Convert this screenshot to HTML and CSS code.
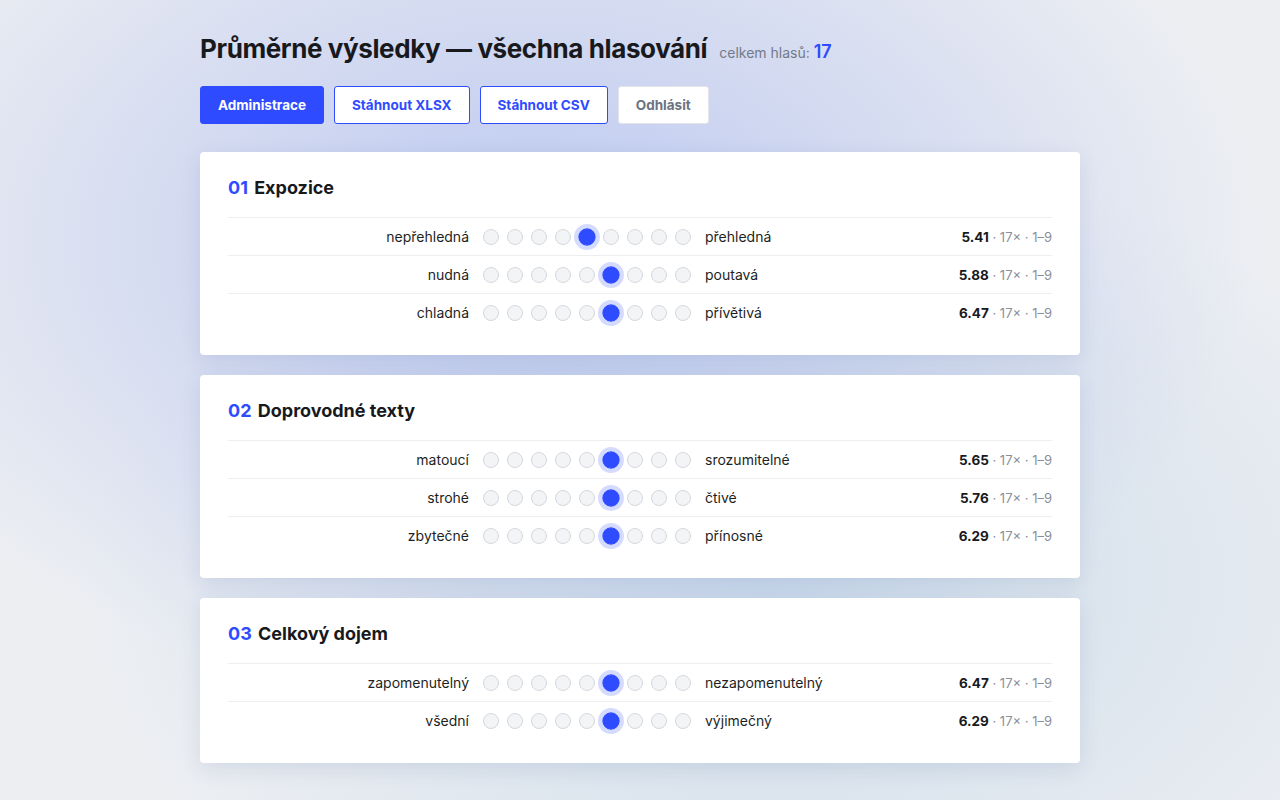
FILE: index.html
```html
<!DOCTYPE html>
<html lang="cs">
  <head>
    <meta charset="UTF-8" />
    <meta name="viewport" content="width=device-width, initial-scale=1.0" />
    <title>Průměrné výsledky</title>
    <link rel="stylesheet" href="styles.css">
  </head>
  <body>
    <div class="page">
      <header class="head">
        <h1>Průměrné výsledky — všechna hlasování</h1>
        <span class="total">celkem hlasů: <b>17</b></span>
      </header>
      <nav class="actions">
        <button class="btn primary">Administrace</button>
        <button class="btn outline">Stáhnout XLSX</button>
        <button class="btn outline">Stáhnout CSV</button>
        <button class="btn plain">Odhlásit</button>
      </nav>

      <section class="card">
        <h2><span class="num">01</span> Expozice</h2>
        <div class="row">
          <span class="lbl-left">nepřehledná</span>
          <span class="dots"><i></i><i></i><i></i><i></i><i class="on"></i><i></i><i></i><i></i><i></i></span>
          <span class="lbl-right">přehledná</span>
          <span class="stat"><b>5.41</b> · 17× · 1–9</span>
        </div>
        <div class="row">
          <span class="lbl-left">nudná</span>
          <span class="dots"><i></i><i></i><i></i><i></i><i></i><i class="on"></i><i></i><i></i><i></i></span>
          <span class="lbl-right">poutavá</span>
          <span class="stat"><b>5.88</b> · 17× · 1–9</span>
        </div>
        <div class="row">
          <span class="lbl-left">chladná</span>
          <span class="dots"><i></i><i></i><i></i><i></i><i></i><i class="on"></i><i></i><i></i><i></i></span>
          <span class="lbl-right">přívětivá</span>
          <span class="stat"><b>6.47</b> · 17× · 1–9</span>
        </div>
      </section>

      <section class="card">
        <h2><span class="num">02</span> Doprovodné texty</h2>
        <div class="row">
          <span class="lbl-left">matoucí</span>
          <span class="dots"><i></i><i></i><i></i><i></i><i></i><i class="on"></i><i></i><i></i><i></i></span>
          <span class="lbl-right">srozumitelné</span>
          <span class="stat"><b>5.65</b> · 17× · 1–9</span>
        </div>
        <div class="row">
          <span class="lbl-left">strohé</span>
          <span class="dots"><i></i><i></i><i></i><i></i><i></i><i class="on"></i><i></i><i></i><i></i></span>
          <span class="lbl-right">čtivé</span>
          <span class="stat"><b>5.76</b> · 17× · 1–9</span>
        </div>
        <div class="row">
          <span class="lbl-left">zbytečné</span>
          <span class="dots"><i></i><i></i><i></i><i></i><i></i><i class="on"></i><i></i><i></i><i></i></span>
          <span class="lbl-right">přínosné</span>
          <span class="stat"><b>6.29</b> · 17× · 1–9</span>
        </div>
      </section>

      <section class="card">
        <h2><span class="num">03</span> Celkový dojem</h2>
        <div class="row">
          <span class="lbl-left">zapomenutelný</span>
          <span class="dots"><i></i><i></i><i></i><i></i><i></i><i class="on"></i><i></i><i></i><i></i></span>
          <span class="lbl-right">nezapomenutelný</span>
          <span class="stat"><b>6.47</b> · 17× · 1–9</span>
        </div>
        <div class="row">
          <span class="lbl-left">všední</span>
          <span class="dots"><i></i><i></i><i></i><i></i><i></i><i class="on"></i><i></i><i></i><i></i></span>
          <span class="lbl-right">výjimečný</span>
          <span class="stat"><b>6.29</b> · 17× · 1–9</span>
        </div>
      </section>
    </div>
  </body>
</html>
```

FILE: styles.css
```css
/* Reset */
* {
  box-sizing: border-box;
  margin: 0;
  padding: 0;
}
html,
body {
  min-height: 100%;
}
body {
  font-family: Inter, "Noto Sans", sans-serif;
  color: #1d1f24;
  background:
    radial-gradient(ellipse 720px 470px at 42% 30%, rgba(188, 200, 240, 1), rgba(188, 200, 240, 0) 100%),
    radial-gradient(ellipse 680px 440px at 60% 72%, rgba(204, 220, 234, 1), rgba(204, 220, 234, 0) 100%),
    #eceef2;
  min-height: 800px;
}
.page {
  width: 880px;
  margin: 0 auto;
  padding: 33px 0 40px;
}
/* Header */
.head {
  display: flex;
  align-items: baseline;
  gap: 12px;
}
.head h1 {
  font-size: 26px;
  font-weight: 700;
  letter-spacing: -0.4px;
  color: #18191d;
}
.total {
  font-size: 14px;
  color: #737a88;
}
.total b {
  font-size: 18px;
  font-weight: 600;
  color: #2f4bff;
}
/* Buttons */
.actions {
  display: flex;
  gap: 10px;
  margin-top: 22px;
}
.btn {
  height: 38px;
  padding: 0 17px;
  font-family: inherit;
  font-size: 13.5px;
  font-weight: 700;
  border-radius: 3px;
  cursor: pointer;
}
.btn.primary {
  background: #2f4bff;
  color: #fff;
  border: 1px solid #2f4bff;
}
.btn.outline {
  background: #fff;
  color: #2f4bff;
  border: 1px solid #2f4bff;
}
.btn.plain {
  background: #fff;
  color: #6b7280;
  border: 1px solid #e3e5ea;
}
/* Cards */
.card {
  background: #fff;
  border-radius: 4px;
  padding: 24px 28px 24px;
  margin-top: 28px;
  box-shadow: 0 6px 20px rgba(60, 80, 140, 0.12);
}
.card + .card {
  margin-top: 20px;
}
.card h2 {
  font-size: 18px;
  font-weight: 700;
  color: #18191d;
  line-height: 24px;
  margin-bottom: 17px;
}
.card h2 .num {
  color: #2f4bff;
  margin-right: 2px;
}
.row {
  display: grid;
  grid-template-columns: 241px auto 1fr auto;
  column-gap: 14px;
  align-items: center;
  height: 38px;
  border-top: 1px solid #eceef1;
  font-size: 14px;
}
.lbl-left {
  text-align: right;
}
.dots {
  display: flex;
  gap: 8px;
}
.dots i {
  width: 16px;
  height: 16px;
  border-radius: 50%;
  background: #f3f4f6;
  border: 1px solid #d4d7dd;
}
.dots i.on {
  background: #2f4bff;
  border-color: #2f4bff;
  box-shadow: 0 0 0 4px rgba(47, 75, 255, 0.2);
  transform: scale(1.08);
}
.stat {
  font-size: 13px;
  color: #8a8f99;
}
.stat b {
  font-size: 13.5px;
  font-weight: 700;
  color: #18191d;
}
```
